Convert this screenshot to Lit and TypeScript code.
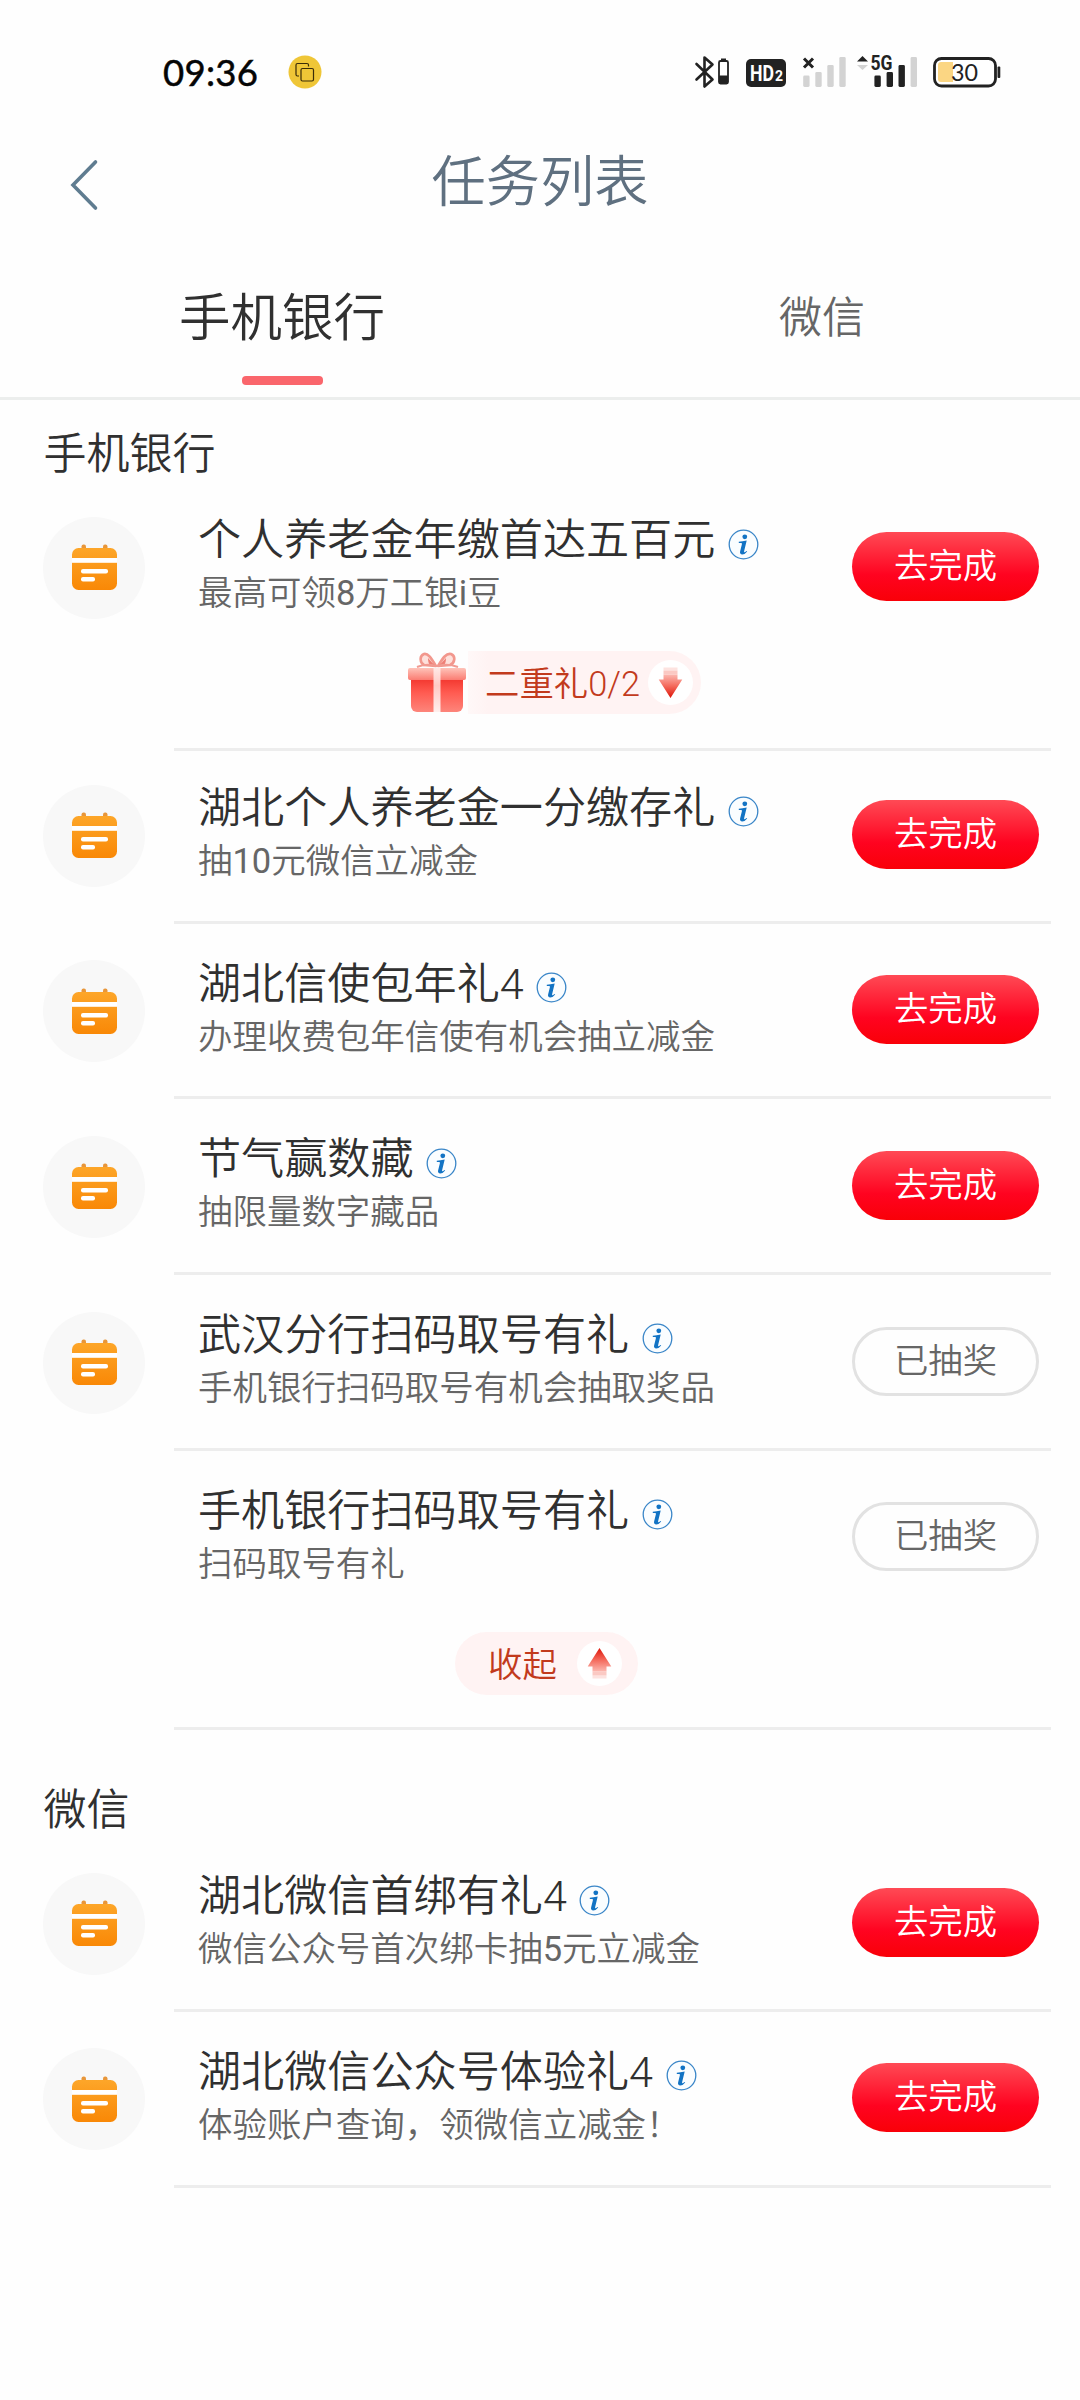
import { LitElement, html, css, svg, nothing } from "lit";
import { customElement, property } from "lit/decorators.js";

interface Task {
  title: string;
  note: string;
  done?: boolean;
  nested?: boolean;
}

/** Wraps Latin letters and digits so they are set in the Latin face. */
const mixed = (s: string) =>
  s.split(/([0-9a-z/]+)/).map((p) => (/^[0-9a-z/]+$/.test(p) ? html`<span class="latin">${p}</span>` : p));

const latin = css`
  .latin { font-family: Roboto, sans-serif; font-weight: 400; line-height: 1; }
  .title .latin, .label .latin { font-weight: 300; }
`;

@customElement("status-bar")
export class StatusBar extends LitElement {
  static styles = css`
    :host { display: flex; height: 130px; align-items: center; justify-content: space-between; box-sizing: border-box; padding: 14px 76px 0 163px; font-weight: 400; }
    .left { display: flex; align-items: center; gap: 30px; }
    .time { font: 36.5px/40px Lato, sans-serif; color: #050505; letter-spacing: 0.3px; -webkit-text-stroke: 0.5px #050505; }
    svg { display: block; }
    text { font-family: Roboto, sans-serif; }
    .thin { font-family: Lato, sans-serif; }
  `;
  render() {
    const bar = (x: number, top: number, fill: string) =>
      svg`<rect x=${x} y=${top} width="6.4" height=${35 - top} rx="1.4" fill=${fill}/>`;
    return html`
      <div class="left">
        <span class="time">09:36</span>
        <svg width="34" height="34" viewBox="0 0 34 34">
          <circle cx="17" cy="17" r="16.5" fill="#efc637"/>
          <g fill="none" stroke="#3a2c08" stroke-width="1.2">
            <path d="M11 21H9.5a1.5 1.5 0 0 1-1.5-1.5V10a1.5 1.5 0 0 1 1.5-1.5H19a1.5 1.5 0 0 1 1.5 1.5v1.5"/>
            <rect x="13" y="13.5" width="12.5" height="12.5" rx="1.5"/>
          </g>
        </svg>
      </div>
      <svg width="310" height="40" viewBox="0 0 310 40">
        <path d="M2.5 12L18.5 27.5L10.5 34.5V5.5L18.5 12.5L2.5 27.5" fill="none" stroke="#222" stroke-width="2.6" stroke-linejoin="round" stroke-linecap="round"/>
        <rect x="25" y="9" width="9" height="22.5" rx="1.5" fill="#fff" stroke="#222" stroke-width="1.8"/>
        <rect x="27" y="6.5" width="5" height="2.5" fill="#222"/>
        <rect x="25" y="23.5" width="9" height="8" rx="1" fill="#222"/>
        <rect x="52" y="7" width="40" height="28" rx="5" fill="#222"/>
        <text x="56" y="29" font-size="22" font-weight="700" fill="#fff" textLength="24" lengthAdjust="spacingAndGlyphs">HD</text>
        <text x="81" y="29" font-size="14" font-weight="700" fill="#fff">2</text>
        <path d="M110 6.5l9 9M119 6.5l-9 9" stroke="#222" stroke-width="3"/>
        ${bar(109.2, 23.5, "#d3d3d3")}${bar(121.3, 20, "#d3d3d3")}${bar(133.3, 13, "#d3d3d3")}${bar(145.3, 5, "#d3d3d3")}
        <path d="M163 9.5l5.5-5.5l5.5 5.5z" fill="#222"/>
        <path d="M163 13l5.5 5l5.5-5z" fill="#d3d3d3"/>
        <text x="176.5" y="18" font-size="20.5" font-weight="700" fill="#222" textLength="22" lengthAdjust="spacingAndGlyphs">5G</text>
        ${bar(180.4, 23.5, "#222")}${bar(192.6, 20, "#222")}${bar(204.5, 13, "#222")}${bar(216.6, 5, "#d3d3d3")}
        <rect x="240.5" y="6.5" width="61" height="27.5" rx="7" fill="#fff" stroke="#222" stroke-width="2.8"/>
        <path d="M247 10h12v20h-12a3 3 0 0 1-3-3v-14a3 3 0 0 1 3-3z" fill="#fbd683"/>
        <text class="thin" x="257" y="29" font-size="24" fill="#222" textLength="27" lengthAdjust="spacingAndGlyphs">30</text>
        <rect x="303.5" y="14.5" width="2.8" height="11.5" rx="1" fill="#222"/>
      </svg>
    `;
  }
}

@customElement("arrow-dot")
export class ArrowDot extends LitElement {
  @property({ type: Boolean }) up = false;
  static styles = css`
    :host { display: block; width: 45px; height: 45px; }
    svg { display: block; }
  `;
  render() {
    return html`<svg width="45" height="45" viewBox="0 0 45 45">
      <defs><linearGradient id="a" x1="0" y1="0" x2="0" y2="1">
        <stop offset="0" stop-color="#fcb8b0"/><stop offset=".5" stop-color="#f4685a"/><stop offset="1" stop-color="#dd1408"/>
      </linearGradient></defs>
      <circle cx="22.5" cy="22.5" r="22.5" fill="#fff"/>
      <g transform=${this.up ? "rotate(180 22.5 22.5)" : "rotate(0)"}>
        <rect x="15.5" y="7.5" width="14" height="3" fill="#fde3e0"/>
        <rect x="15.5" y="10.5" width="14" height="4" fill="#fbc9c3"/>
        <path d="M15.5 14.5h14v5h4.8L22.5 38L10.7 19.5h4.8z" fill="url(#a)"/>
      </g>
    </svg>`;
  }
}

@customElement("task-row")
export class TaskRow extends LitElement {
  @property({ attribute: false }) task!: Task;
  static styles = [latin, css`
    :host { display: flex; padding: 0 29px 0 43px; align-items: stretch; }
    .icon { flex: none; width: 102px; height: 102px; margin-top: 36.6px; border-radius: 50%; background: #f8f8f8; display: flex; align-items: center; justify-content: center; }
    .icon.empty { background: none; }
    .body { flex: 1; margin-left: 29px; border-bottom: 3px solid #ededed; box-sizing: border-box; padding: 0 12px 0 24px; min-height: 175.7px; display: flex; flex-direction: column; }
    .line { display: flex; justify-content: space-between; }
    .texts { padding-top: 28px; }
    .title { display: flex; align-items: center; gap: 12.5px; font-size: 43.12px; line-height: 56px; height: 56px; color: #303030; white-space: nowrap; }
    .info { display: block; margin-top: 16px; }
    .note { font-size: 34.48px; line-height: 48px; height: 48px; margin-top: 2px; color: #666; white-space: nowrap; }
    .btn { flex: none; width: 187px; height: 69px; margin-top: 51.6px; border-radius: 35px; box-sizing: border-box; text-align: center; font-size: 34.4px; line-height: 62px; color: #fff; background: linear-gradient(#ff4a55, #ff0320 62%, #f90008); }
    .btn.done { background: #fefefe; border: 3px solid #e2e2e2; color: #666; line-height: 57px; }
    ::slotted(*) { align-self: center; }
  `];
  render() {
    const t = this.task;
    return html`
      <div class="icon ${t.nested ? "empty" : ""}">
        ${t.nested ? nothing : html`<svg width="47" height="47" viewBox="0 0 47 47">
          <defs><linearGradient id="o" x1="0" y1="0" x2="0" y2="1">
            <stop offset="0" stop-color="#fda629"/><stop offset="1" stop-color="#f98806"/>
          </linearGradient></defs>
          <rect x="10.5" y="0.5" width="4.5" height="6" rx="2" fill="#e8963a"/>
          <rect x="32" y="0.5" width="4.5" height="6" rx="2" fill="#e8963a"/>
          <rect x="1" y="4" width="45" height="42" rx="6.5" fill="url(#o)"/>
          <rect x="1" y="14" width="45" height="4.8" fill="#fff"/>
          <rect x="10" y="25" width="27" height="4.5" rx="2" fill="#fff"/>
          <rect x="10" y="33" width="14" height="4.5" rx="2" fill="#fff"/>
        </svg>`}
      </div>
      <div class="body">
        <div class="line">
          <div class="texts">
            <div class="title"><span>${mixed(t.title)}</span>
              <svg class="info" width="31" height="31" viewBox="0 0 31 31">
                <circle cx="15.5" cy="15.5" r="14.3" fill="#fafdff" stroke="#3a86c8" stroke-width="1.3"/>
                <circle cx="16.8" cy="7.8" r="2.4" fill="#1273c4"/>
                <path d="M10.8 12.8q3.7-.1 7.9-1.2l-2.6 10.7q-.2 1.2.6.9q.8-.3 1.8-1.3l.7.7q-2.2 2.9-4.9 2.9q-2.8-.2-2.2-2.9l1.8-7.3q.3-1.2-.8-1.3h-2.3z" fill="#1273c4"/>
              </svg>
            </div>
            <div class="note">${mixed(t.note)}</div>
          </div>
          <div class="btn ${t.done ? "done" : ""}">${t.done ? "已抽奖" : "去完成"}</div>
        </div>
        <slot></slot>
      </div>
    `;
  }
}

@customElement("app-root")
export class AppRoot extends LitElement {
  static styles = [latin, css`
    :host { display: block; width: 1080px; height: 2400px; overflow: hidden; background: #fefefe; font-family: "Noto Sans CJK SC", sans-serif; font-weight: 350; }
    .nav { display: grid; grid-template-columns: 140px 1fr 140px; align-items: center; height: 100px; }
    .back { margin-left: 68px; margin-top: 9px; display: block; }
    .nav-title { text-align: center; font-size: 54.2px; line-height: 70px; color: #5f7080; margin-top: -4px; }
    .tabs { display: grid; grid-template-columns: 564px 516px; height: 167px; border-bottom: 3px solid #eceeed; }
    .tab { text-align: center; font-size: 43px; line-height: 64px; color: #666; padding-top: 52px; }
    .tab.on { font-size: 51.5px; color: #303030; }
    .tab.on::after { content: ""; display: block; width: 81px; height: 9px; margin: 30px auto 0; border-radius: 4px; background: #fa666c; }
    .sec { padding-left: 43.5px; font-size: 43px; line-height: 60px; color: #303030; }
    .first { padding-top: 20px; height: 60px; }
    .second { padding-top: 46px; height: 60.5px; }
    .gift-row { display: flex; align-items: center; margin: 37px 0 33.5px -129px; height: 63px; }
    .gift { display: block; margin-right: 1px; }
    .chip { display: flex; align-items: center; height: 63px; box-sizing: border-box; background: #fff3f3; color: #c23a1c; font-size: 34.4px; line-height: 50px; }
    .chip.open { border-radius: 0 32px 32px 0; padding: 0 8px 0 17px; gap: 8px; background: linear-gradient(90deg, #fff8f8, #fff3f3 20px); }
    .chip.fold { border-radius: 32px; padding: 0 16px 0 33px; gap: 20px; margin: 47px 0 32px -144px; }
    .label { margin-top: -3px; }
    .after-gift { margin-top: -2.6px; }
  `];

  private bank: Task[] = [
    { title: "湖北个人养老金一分缴存礼", note: "抽10元微信立减金" },
    { title: "湖北信使包年礼4", note: "办理收费包年信使有机会抽立减金" },
    { title: "节气赢数藏", note: "抽限量数字藏品" },
    { title: "武汉分行扫码取号有礼", note: "手机银行扫码取号有机会抽取奖品", done: true },
  ];
  private wechat: Task[] = [
    { title: "湖北微信首绑有礼4", note: "微信公众号首次绑卡抽5元立减金" },
    { title: "湖北微信公众号体验礼4", note: "体验账户查询，领微信立减金！" },
  ];

  render() {
    return html`
      <status-bar></status-bar>
      <div class="nav">
        <svg class="back" width="32" height="52" viewBox="0 0 32 52">
          <path d="M27.5 3L5 26L27.5 49" fill="none" stroke="#5f7c90" stroke-width="3.6" stroke-linecap="round"/>
        </svg>
        <div class="nav-title">任务列表</div>
      </div>
      <div class="tabs"><div class="tab on">手机银行</div><div class="tab">微信</div></div>
      <div class="sec first">手机银行</div>
      <task-row .task=${{ title: "个人养老金年缴首达五百元", note: "最高可领8万工银i豆" }}>
        <div class="gift-row">
          <svg class="gift" width="60" height="62" viewBox="0 0 60 62">
            <defs>
              <linearGradient id="b" x1="0" y1="0" x2="0" y2="1"><stop offset="0" stop-color="#f03028"/><stop offset=".45" stop-color="#ff5a50"/><stop offset="1" stop-color="#fd857b"/></linearGradient>
              <linearGradient id="l" x1="0" y1="0" x2="0" y2="1"><stop offset="0" stop-color="#fec3b9"/><stop offset="1" stop-color="#fb7c72"/></linearGradient>
              <linearGradient id="r" x1="0" y1="0" x2="0" y2="1"><stop offset="0" stop-color="#ffe9e6"/><stop offset=".4" stop-color="#ffc9c4"/><stop offset="1" stop-color="#fff0ee"/></linearGradient>
            </defs>
            <path d="M29 14C24 6 21 1 17 2C12 4 13 11 17 13zM31 14C36 6 39 1 44 2C49 4 48 11 43 13z" fill="#fee0db" stroke="#f2978d" stroke-width="2.6" stroke-linejoin="round"/>
            <path d="M29 14q-4-3-8-8q0 6 3 8zM31 14q4-3 8-8q0 6-3 8z" fill="#ee7f76"/>
            <path d="M10 15q10-4 19-1h2q9-3 20 1" fill="none" stroke="#f19b92" stroke-width="2"/>
            <path d="M4 24h52v30a6 6 0 0 1-6 6H10a6 6 0 0 1-6-6z" fill="url(#b)"/>
            <rect x="1" y="16" width="58" height="12" rx="2" fill="url(#l)"/>
            <rect x="26.5" y="16" width="7" height="44" fill="url(#r)"/>
          </svg>
          <div class="chip open"><span class="label">${mixed("二重礼0/2")}</span><arrow-dot></arrow-dot></div>
        </div>
      </task-row>
      ${this.bank.map((t, i) => html`<task-row class=${i === 0 ? "after-gift" : ""} .task=${t}></task-row>`)}
      <task-row .task=${{ title: "手机银行扫码取号有礼", note: "扫码取号有礼", done: true, nested: true }}>
        <div class="chip fold"><span class="label">收起</span><arrow-dot up></arrow-dot></div>
      </task-row>
      <div class="sec second">微信</div>
      ${this.wechat.map((t) => html`<task-row .task=${t}></task-row>`)}
    `;
  }
}
